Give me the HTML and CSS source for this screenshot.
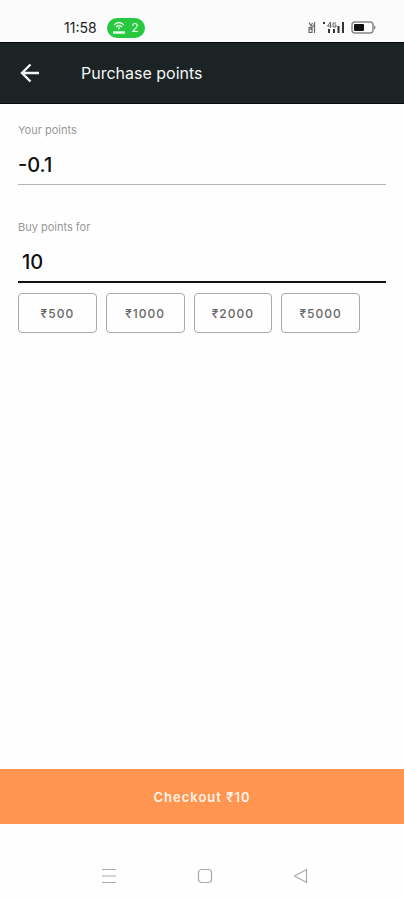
FILE: index.html
```html
<!DOCTYPE html>
<html lang="en">
<head>
<meta charset="utf-8">
<meta name="viewport" content="width=device-width, initial-scale=1">
<title>Purchase points</title>
<link rel="stylesheet" href="styles.css">
</head>
<body>
<div class="status">
  <span class="time">11:58</span>
  <span class="hotspot">
    <svg width="12" height="14" viewBox="0 0 12 14" fill="none" stroke="currentColor" aria-hidden="true">
      <path d="M1 4Q6 -1 11 4M3 6Q6 3 9 6" stroke-width="1.3"/>
      <circle cx="6" cy="7.3" r="1.1" fill="currentColor" stroke="none"/>
      <path d="M1 11.5H11" stroke-width="2.6" stroke-linecap="round"/>
    </svg>
    <span>2</span>
  </span>
  <span class="signals">
    <svg width="8" height="13" viewBox="0 0 8 13" fill="none" stroke="#666" stroke-width="1.2" aria-hidden="true">
      <path d="M1 1.5L3 5L4.500 2M6.500 1V12M1 6.500H4V11.500H1ZM2 9L6 4"/>
    </svg>
    <svg width="23" height="13" viewBox="0 0 23 13" fill="#333" aria-hidden="true">
      <path d="M1 1H3V3H1ZM6 8H8V12H6ZM11 8H13V12H11ZM15.500 5H17.500V12H15.500ZM20 1H22V12H20Z"/>
      <path d="M8.500 1L5.500 5H9.500M8.500 1V7M14 2H11V6H14V4H12.500" fill="none" stroke="#666"/>
    </svg>
    <svg width="26" height="13" viewBox="0 0 26 13" aria-hidden="true">
      <rect x="1" y="1" width="21" height="11" rx="3" fill="#fff" stroke="#888" stroke-width="1.5"/>
      <rect x="3" y="3" width="10" height="7" rx="1" fill="#111"/>
      <path d="M23 4Q26 6.500 23 9Z" fill="#888"/>
    </svg>
  </span>
</div>
<header class="bar">
  <button class="back" type="button" aria-label="Back">
    <svg width="20" height="20" viewBox="0 0 20 20" fill="none" stroke="currentColor" stroke-width="2.400" aria-hidden="true">
      <path d="M19 10H2M10.500 1.500L2 10L10.500 18.500"/>
    </svg>
  </button>
  <h1>Purchase points</h1>
</header>
<main class="form">
  <div class="field">
    <label for="balance">Your points</label>
    <input id="balance" type="text" value="-0.1" readonly>
  </div>
  <div class="field active">
    <label for="amount">Buy points for</label>
    <input id="amount" type="text" inputmode="numeric" value="10">
  </div>
  <div class="presets">
    <button type="button">₹500</button>
    <button type="button">₹1000</button>
    <button type="button">₹2000</button>
    <button type="button">₹5000</button>
  </div>
</main>
<button class="checkout" type="button">Checkout ₹10</button>
<nav class="system">
  <button type="button" aria-label="Recent apps">
    <svg width="16" height="16" viewBox="0 0 16 16" fill="none" stroke="currentColor" aria-hidden="true"><path d="M1 1.500H15M1 8H15M1 14.500H15" stroke-width="1.200"/></svg>
  </button>
  <button type="button" aria-label="Home">
    <svg width="16" height="16" viewBox="0 0 16 16" fill="none" stroke="currentColor" stroke-width="1.200" aria-hidden="true"><rect x="1.500" y="1.500" width="13" height="13" rx="3"/></svg>
  </button>
  <button type="button" aria-label="Back">
    <svg width="16" height="16" viewBox="0 0 16 16" fill="none" stroke="currentColor" stroke-width="1.200" stroke-linejoin="round" aria-hidden="true"><path d="M13.500 1.500V14.500L1.500 8Z"/></svg>
  </button>
</nav>
</body>
</html>
```
FILE: styles.css
```css
* {
  box-sizing: border-box;
}

body {
  margin: 0;
  min-height: 100vh;
  display: flex;
  flex-direction: column;
  background: #fefefe;
  color: #111;
  font-family: Inter, "Open Sans", "Noto Sans", sans-serif;
}

button {
  margin: 0;
  padding: 0;
  border: 0;
  background: none;
  color: inherit;
  font: inherit;
}

svg {
  display: block;
}

.status {
  display: flex;
  align-items: center;
  height: 42px;
  padding: 13px 27px 0 64px;
  background: #fbfbfb;
}

.time {
  width: 43px;
  font-size: 14px;
  line-height: 20px;
  color: #222;
}

.hotspot {
  display: flex;
  align-items: center;
  justify-content: center;
  gap: 6px;
  width: 38px;
  height: 20px;
  border-radius: 10px;
  background: #28c840;
  color: #e6ffe9;
  font-size: 12px;
  line-height: 20px;
}

.signals {
  display: flex;
  gap: 6px;
  margin-left: auto;
}

.bar {
  display: flex;
  align-items: center;
  gap: 41px;
  height: 62px;
  padding: 0 20px;
  border-top: 1px solid #080c0d;
  border-bottom: 1px solid #080c0d;
  background: #1b2324;
  color: #f4f6f6;
}

.bar h1 {
  margin: 0;
  font-size: 16px;
  line-height: 24px;
  font-weight: 400;
}

.form {
  flex: 1;
  padding: 18px 18px 0;
}

.field {
  display: flex;
  flex-direction: column;
  margin-bottom: 34px;
  border-bottom: 1px solid #b4b4b4;
}

.field label {
  font-size: 11px;
  line-height: 16px;
  color: #999;
}

.field input {
  width: 100%;
  height: 46px;
  padding: 8px 0 0;
  border: 0;
  outline: 0;
  background: none;
  color: #111;
  font-family: inherit;
  font-size: 20px;
  font-weight: 500;
  line-height: 28px;
}

.field.active {
  margin-bottom: 10px;
  border-bottom: 2px solid #111;
}

.field.active input {
  padding-left: 4px;
}

.presets {
  display: grid;
  grid-template-columns: repeat(4, 1fr);
  gap: 9px;
  margin-right: 26px;
}

.presets button {
  height: 40px;
  border: 1px solid #aaa;
  border-radius: 4px;
  color: #666;
  font-size: 12px;
  font-weight: 500;
  letter-spacing: 1px;
}

.checkout {
  height: 55px;
  background: #ff9550;
  color: #fff3e8;
  font-size: 13px;
  font-weight: 600;
  letter-spacing: 1px;
}

.system {
  display: flex;
  align-items: center;
  justify-content: space-between;
  height: 76px;
  padding: 28px 95px 0 101px;
  color: #aaa;
}
```
